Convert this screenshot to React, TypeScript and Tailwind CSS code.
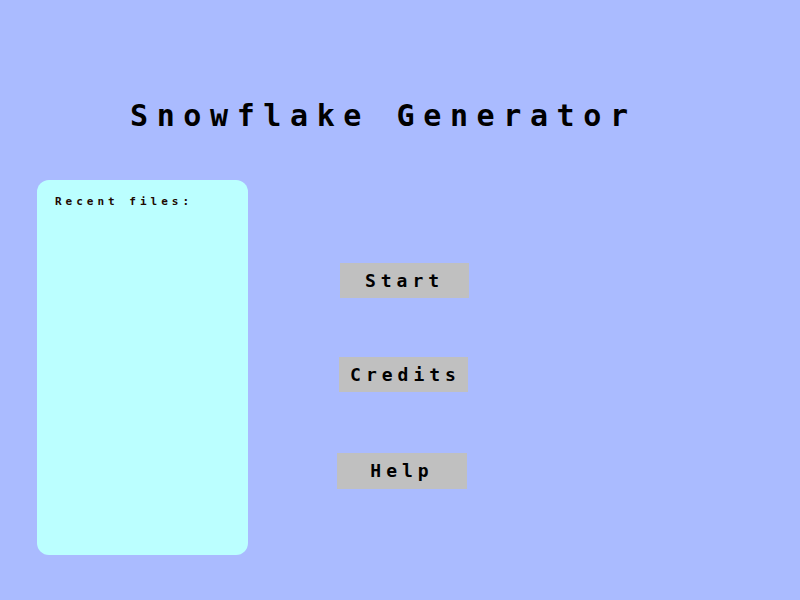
import React from 'react'

const MONO = "font-['DejaVu_Sans_Mono','Liberation_Mono',monospace] font-bold"

type MenuButtonProps = {
  label: string
  className?: string
}

const MenuButton: React.FC<MenuButtonProps> = ({ label, className }) => (
  <button
    type="button"
    className={`flex h-[35px] w-[129px] items-center justify-center bg-[#c0c0c0] text-[18px] leading-none tracking-[5px] text-black ${MONO} ${className ?? ''}`}
  >
    {label}
  </button>
)

export default function App() {
  return (
    <div className="flex h-[600px] w-[800px] flex-col bg-[#aabbff]">
      <h1 className={`ml-[130px] mt-[101px] text-[30px] leading-none tracking-[8.6px] text-black ${MONO}`}>
        Snowflake Generator
      </h1>

      <div className="mt-[49px] flex">
        <div className="ml-[37px] h-[375px] w-[211px] rounded-[12px] bg-[#bbffff] pl-[18px] pt-[16px]">
          <p className={`text-[11px] leading-none tracking-[4px] text-[#200800] ${MONO}`}>Recent files:</p>
        </div>

        <div className="flex flex-col">
          <MenuButton label="Start" className="ml-[92px] mt-[83px]" />
          <MenuButton label="Credits" className="ml-[91px] mt-[59px] pl-[4px]" />
          <MenuButton label="Help" className="ml-[89px] mt-[61px] h-[36px] w-[130px]" />
        </div>
      </div>
    </div>
  )
}
